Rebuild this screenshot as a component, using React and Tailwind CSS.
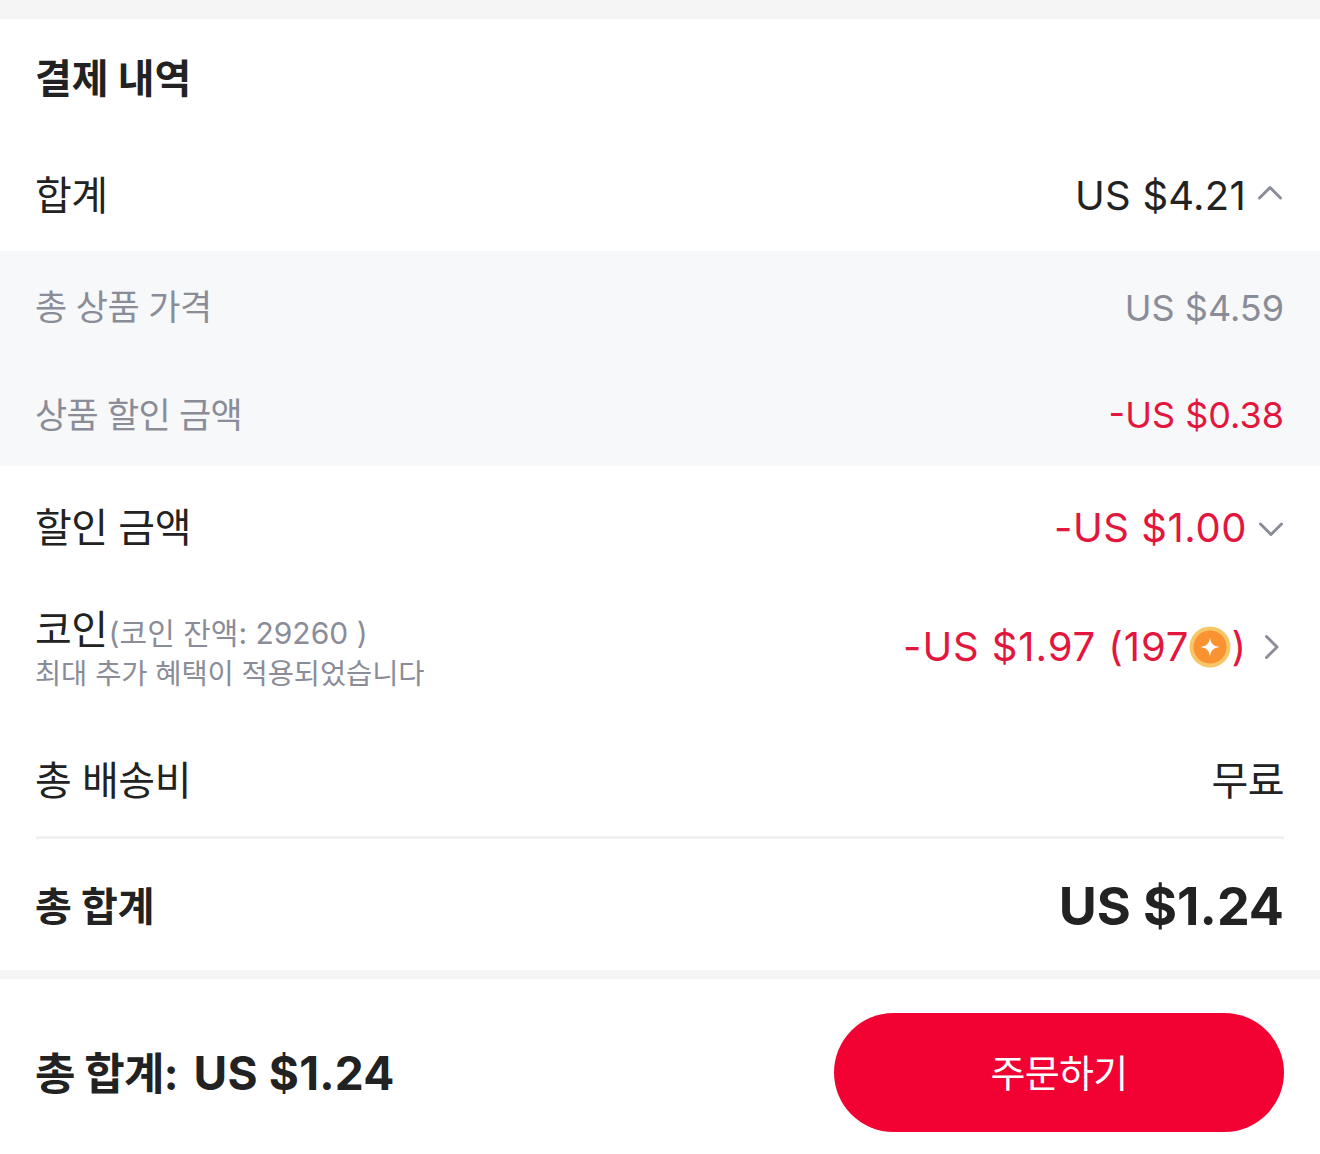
const FONT = "font-['Inter','Noto_Sans_CJK_KR',sans-serif]";

function Chevron({ d, className = "" }) {
  return (
    <svg width="26" height="26" viewBox="0 0 26 26" fill="none" className={className}>
      <path d={d} stroke="#8a8d98" strokeWidth="3" strokeLinecap="round" strokeLinejoin="round" />
    </svg>
  );
}

function Coin() {
  return (
    <svg width="42" height="42" viewBox="0 0 42 42" className="shrink-0">
      <circle cx="21" cy="21" r="20.5" fill="#f6c667" />
      <circle cx="21" cy="21" r="16.5" fill="#fb9232" />
      <path d="M21 11.5C21.8 17.5 24.5 20.2 30.5 21C24.5 21.8 21.8 24.5 21 30.5C20.2 24.5 17.5 21.8 11.5 21C17.5 20.2 20.2 17.5 21 11.5Z" fill="#fff" />
    </svg>
  );
}

export default function App() {
  return (
    <div className={`w-[1320px] h-[1154px] bg-white overflow-hidden flex flex-col ${FONT} text-[#222222]`}>
      <div className="h-[19px] bg-[#f5f5f5]" />
      <div className="h-[951px] flex flex-col">
        <div className="h-[118px] pl-[35px] pr-9 pt-[2px] flex items-center">
          <h2 className="text-[40px] font-bold leading-none tracking-[-0.1px]">결제 내역</h2>
        </div>
        <div className="h-[114px] pl-[35px] pr-9 pt-[4px] flex items-center justify-between">
          <span className="text-[40px] leading-none tracking-[-0.5px]">합계</span>
          <div className="flex items-center">
            <span className="text-[40px] leading-none tracking-[0.25px]">US $4.21</span>
            <Chevron d="M2.5 17L13 6.5L23.500 17" className="ml-[11px] -mt-1 mr-px" />
          </div>
        </div>
        <div className="bg-[#f7f8fa] h-[215px] flex flex-col leading-none">
          <div className="flex-1 pl-[35px] pr-9 pt-[6px] flex items-center justify-between text-[#8a8d98]">
            <span className="text-[35px] tracking-[-0.6px]">총 상품 가격</span>
            <span className="text-[36px]">US $4.59</span>
          </div>
          <div className="flex-1 pl-[35px] pr-9 pt-[6px] flex items-center justify-between">
            <span className="text-[35px] text-[#8a8d98] tracking-[-0.75px]">상품 할인 금액</span>
            <span className="text-[36px] text-[#e3173e]">-US $0.38</span>
          </div>
        </div>
        <div className="h-[123px] pl-[35px] pr-9 flex items-center justify-between">
          <span className="text-[40px] leading-none tracking-[-0.5px]">할인 금액</span>
          <div className="flex items-center text-[#e3173e]">
            <span className="text-[40px] leading-none tracking-[0.55px]">-US $1.00</span>
            <Chevron d="M2.500 9L13 19.500L23.500 9" className="ml-[11px]" />
          </div>
        </div>
        <div className="h-[123px] pl-[35px] pr-9 flex items-center justify-between">
          <div className="flex flex-col -mt-[1px]">
            <div className="flex items-baseline">
              <span className="text-[40px] leading-[44px] tracking-[-0.5px]">코인</span>
              <span className="text-[30px] leading-[44px] text-[#8a8d98] ml-px">(코인 잔액: 29260 )</span>
            </div>
            <span className="text-[28.5px] leading-[37px] text-[#8a8d98] tracking-[-0.1px]">최대 추가 혜택이 적용되었습니다</span>
          </div>
          <div className="flex items-center text-[#e3173e] text-[40px] leading-none -mt-2">
            <span className="tracking-[0.9px]">-US $1.97 (197</span>
            <Coin />
            <span>)</span>
            <Chevron d="M7.500 2.500L18 13L7.500 23.500" className="ml-[13px] -mr-px" />
          </div>
        </div>
        <div className="h-[127px] pl-9 pr-9">
          <div className="h-full pt-[14px] flex items-center justify-between border-b-[3px] border-[#f1f1f1]">
            <span className="text-[40px] leading-none tracking-[-0.5px] -ml-px">총 배송비</span>
            <span className="text-[40px] leading-none tracking-[-0.5px]">무료</span>
          </div>
        </div>
        <div className="flex-1 pl-[35px] pr-9 pt-[4px] flex items-center justify-between">
          <span className="text-[40px] font-bold leading-none tracking-[-0.1px]">총 합계</span>
          <span className="text-[52px] font-bold leading-none">US $1.24</span>
        </div>
      </div>
      <div className="h-[9px] bg-[#f5f5f5]" />
      <div className="flex-1 pl-[35px] pr-9 pt-[14px] flex items-center justify-between">
        <div className="font-bold leading-none flex items-baseline gap-[16px] -mt-[2px]">
          <span className="text-[44px] tracking-[-0.8px]">총 합계:</span>
          <span className="text-[46px] tracking-[0.2px]">US $1.24</span>
        </div>
        <button className="w-[450px] h-[119px] rounded-[60px] bg-[#f20233] text-white text-[38px] leading-none tracking-[-0.7px] flex items-center justify-center -mt-[2px]">주문하기</button>
      </div>
    </div>
  );
}
